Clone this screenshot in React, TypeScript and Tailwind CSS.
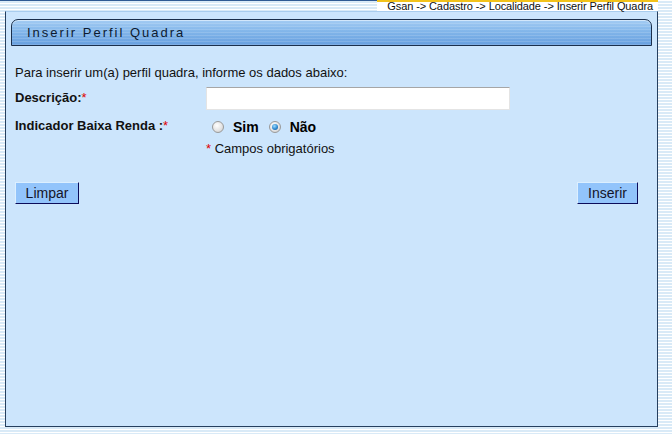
import { useState } from "react";

function Radio({ checked, onClick }: { checked: boolean; onClick: () => void }) {
  return (
    <span
      onClick={onClick}
      className="w-[12px] h-[12px] rounded-full border border-[#9a9a9a] bg-[radial-gradient(circle_at_40%_35%,#ffffff,#e2e2e2_60%,#c4c4c4)] flex items-center justify-center shrink-0 cursor-pointer"
    >
      {checked && (
        <span className="w-[6px] h-[6px] rounded-full bg-[radial-gradient(circle_at_40%_35%,#9fdcff,#2f8ad0_55%,#0f4a86)]" />
      )}
    </span>
  );
}

export default function App() {
  const [baixaRenda, setBaixaRenda] = useState<"sim" | "nao">("nao");
  const [descricao, setDescricao] = useState("");

  return (
    <div className="w-[672px] h-[434px] overflow-hidden bg-[image:repeating-linear-gradient(to_bottom,#ffffff_0px,#ffffff_1px,#d9eaf7_1px,#d9eaf7_3px)] font-['Liberation_Sans',Arial,sans-serif] text-[#111]">
      <div className="flex h-[11px]">
        <div className="w-[377px] border-t border-[#2f5a94]" />
        <div className="w-[281px] border-t-2 border-[#f2c21a] bg-white text-[11px] leading-[9px] tracking-[-0.1px] text-right pr-[5px] text-[#111]">
          Gsan -&gt; Cadastro -&gt; Localidade -&gt; Inserir Perfil Quadra
        </div>
      </div>

      <div className="ml-[5px] w-[653px] h-[416px] bg-[#cce5fc] border border-[#263f5e] border-t-[#a9cdee] flex flex-col">
        <div className="mx-[5px] mt-[7px] h-[27px] rounded-t-[7px] border border-[#1b2f4b] bg-[image:repeating-linear-gradient(to_bottom,rgba(255,255,255,0.14)_0px,rgba(255,255,255,0.14)_1px,transparent_1px,transparent_3px),linear-gradient(to_bottom,#a4ccf3,#82b6ea_45%,#679fdf)] shadow-[inset_0_1px_0_#d2e7fb] flex items-center pl-[15px]">
          <span className="text-[13px] tracking-[2px] text-[#0c1a30]">Inserir Perfil Quadra</span>
        </div>

        <div className="px-[9px] pt-[20px] text-[13px]">
          <p className="leading-[14px]">Para inserir um(a) perfil quadra, informe os dados abaixo:</p>

          <div className="flex items-center mt-[7px]">
            <span className="w-[191px] font-bold leading-[15px] -mt-[2px]">
              Descrição:<span className="text-[#e00000] font-normal">*</span>
            </span>
            <input
              value={descricao}
              onChange={(e) => setDescricao(e.target.value)}
              className="w-[304px] h-[23px] bg-white border border-[#e4e4e4] border-t-[#a6a6a6] outline-none px-1 text-[13px]"
            />
          </div>

          <div className="flex mt-[8px]">
            <span className="w-[191px] font-bold leading-[15px]">
              Indicador Baixa Renda :<span className="text-[#e00000] font-normal">*</span>
            </span>
            <div className="flex items-center pl-[6px] pt-[1px] text-[14px] leading-[16px] font-bold text-black">
              <Radio checked={baixaRenda === "sim"} onClick={() => setBaixaRenda("sim")} />
              <span className="ml-[9px] mr-[10px]">Sim</span>
              <Radio checked={baixaRenda === "nao"} onClick={() => setBaixaRenda("nao")} />
              <span className="ml-[9px]">Não</span>
            </div>
          </div>

          <p className="ml-[191px] mt-[6px] leading-[15px]">
            <span className="text-[#e00000]">*</span> Campos obrigatórios
          </p>

          <div className="flex justify-between mt-[26px] pr-[10px]">
            <button
              onClick={() => {
                setDescricao("");
                setBaixaRenda("nao");
              }}
              className="w-[64px] h-[22px] bg-[#92c4fb] border border-[#dcefff] border-r-[#0c0c5a] border-b-[#0c0c5a] text-[14px] text-[#141428]"
            >
              Limpar
            </button>
            <button className="w-[61px] h-[22px] bg-[#92c4fb] border border-[#dcefff] border-r-[#0c0c5a] border-b-[#0c0c5a] text-[14px] text-[#141428]">
              Inserir
            </button>
          </div>
        </div>
      </div>
    </div>
  );
}
